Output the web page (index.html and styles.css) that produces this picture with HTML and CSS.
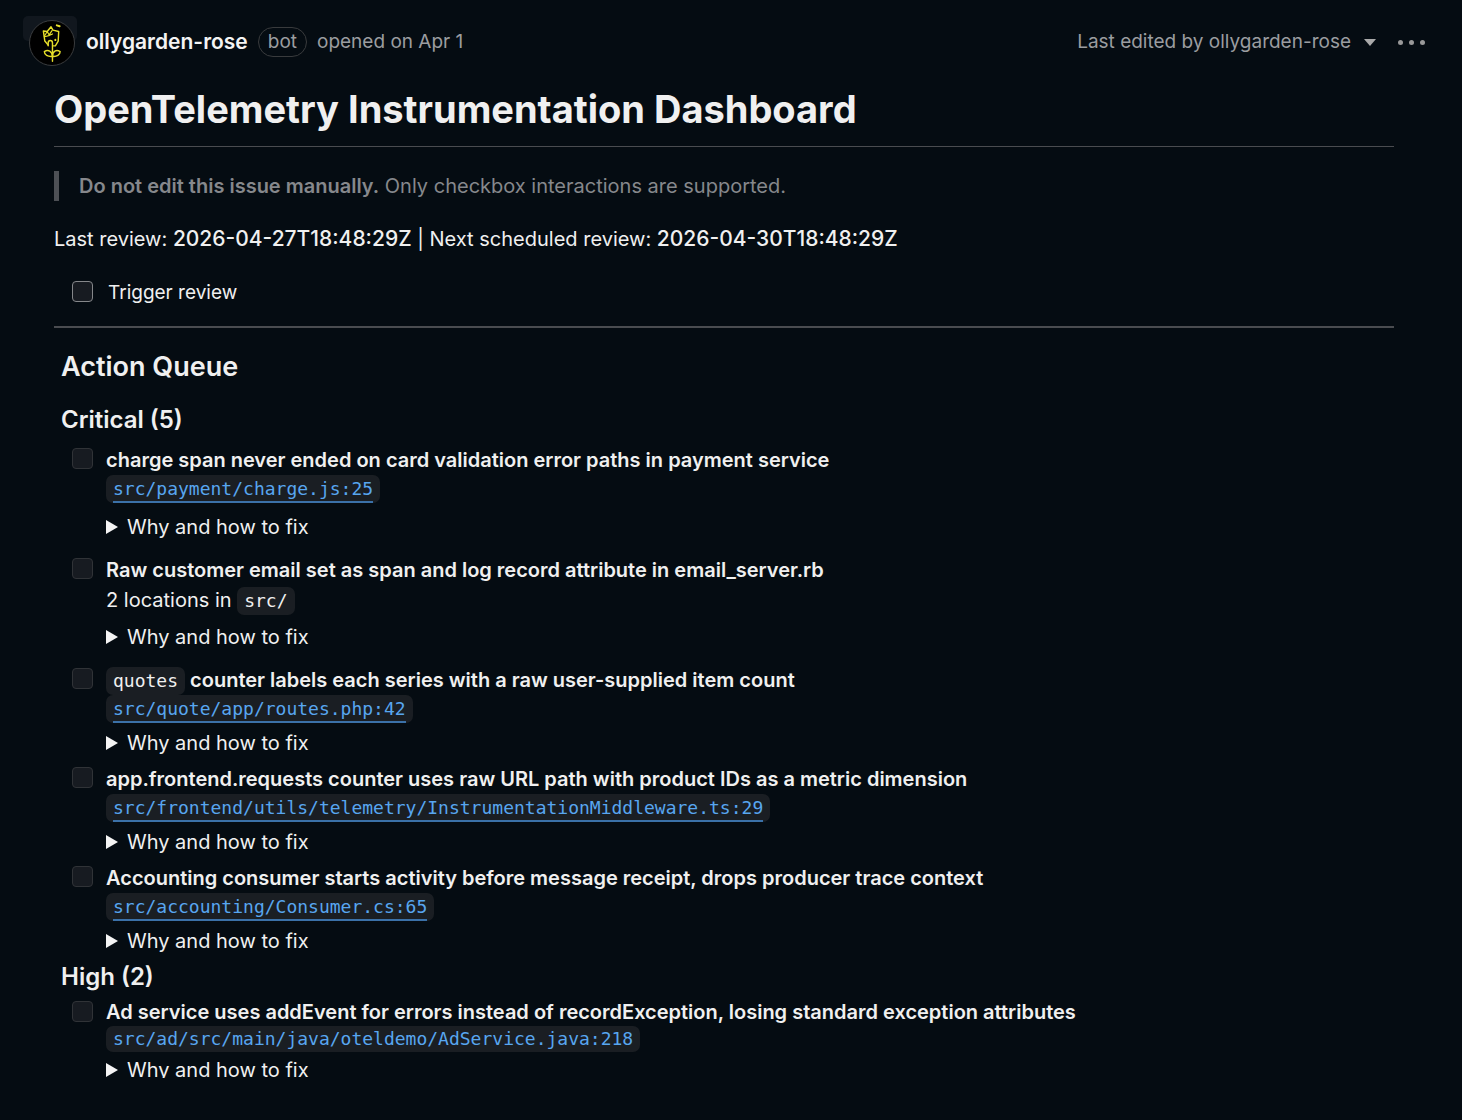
FILE: index.html
```
<!DOCTYPE html>
<html lang="en">

<head>
  <meta charset="UTF-8" />
  <meta name="viewport" content="width=device-width, initial-scale=1.0">
  <title>OpenTelemetry Instrumentation Dashboard</title>
  <link rel="stylesheet" href="styles.css">
</head>

<body>
  <header class="issue-header">
    <div class="avatar">
      <svg viewBox="0 0 46 46" width="46" height="46" fill="none" stroke="#e6df2a" stroke-width="1.5" stroke-linecap="round" stroke-linejoin="round" aria-hidden="true">
        <path d="M19 25l-3.500-4L14 10.500l4 .5 4-5 2 3.500 6 1.500-.5 10-3 5h-2" />
        <path d="M15 16l3-5 2 3.500 3-4.500M15.500 16.500l5-1.500 3-1.500" stroke-width="1.200" />
        <path d="M19 26v-3c0-3.500 4.500-3.500 4.500 0v19" />
        <path d="M28 4.500l3 1" stroke-width="2" />
        <path d="M26.500 19.500v.5" stroke-width="2" />
        <path d="M23.500 37c-5 .5-8.500-1.500-8.500-5 4-2.500 8-.5 8.500 5zM23.500 37c4.500.5 8-1.500 8-5-4-2.500-8-.5-8 5z" />
      </svg>
    </div>
    <a class="author" href="#">ollygarden-rose</a>
    <span class="badge">bot</span>
    <span class="opened">opened on Apr 1</span>
    <div class="header-right">
      <button class="edited" type="button">Last edited by ollygarden-rose <span class="caret"></span></button>
      <button class="kebab" type="button" aria-label="Show options"><i></i><i></i><i></i></button>
    </div>
  </header>

  <main class="issue-body">
    <h1>OpenTelemetry Instrumentation Dashboard</h1>
    <blockquote><strong>Do not edit this issue manually.</strong> Only checkbox interactions are supported.</blockquote>
    <p class="review">Last review: <strong>2026-04-27T18:48:29Z</strong> | Next scheduled review: <strong>2026-04-30T18:48:29Z</strong></p>
    <div class="trigger">
      <input type="checkbox" id="trigger">
      <label for="trigger">Trigger review</label>
    </div>
    <hr>

    <section class="queue">
      <h2>Action Queue</h2>
      <h3>Critical (5)</h3>
      <ul class="tasks">
        <li class="loose">
          <input type="checkbox" id="task1">
          <div class="task">
            <label for="task1">charge span never ended on card validation error paths in payment service</label>
            <p><a href="#"><code><span>src/payment/charge.js:25</span></code></a></p>
            <details><summary>Why and how to fix</summary></details>
          </div>
        </li>
        <li class="loose">
          <input type="checkbox" id="task2">
          <div class="task">
            <label for="task2">Raw customer email set as span and log record attribute in email_server.rb</label>
            <p>2 locations in <code>src/</code></p>
            <details><summary>Why and how to fix</summary></details>
          </div>
        </li>
        <li>
          <input type="checkbox" id="task3">
          <div class="task">
            <label for="task3"><code>quotes</code> counter labels each series with a raw user-supplied item count</label>
            <p><a href="#"><code><span>src/quote/app/routes.php:42</span></code></a></p>
            <details><summary>Why and how to fix</summary></details>
          </div>
        </li>
        <li>
          <input type="checkbox" id="task4">
          <div class="task">
            <label for="task4">app.frontend.requests counter uses raw URL path with product IDs as a metric dimension</label>
            <p><a href="#"><code><span>src/frontend/utils/telemetry/InstrumentationMiddleware.ts:29</span></code></a></p>
            <details><summary>Why and how to fix</summary></details>
          </div>
        </li>
        <li>
          <input type="checkbox" id="task5">
          <div class="task">
            <label for="task5">Accounting consumer starts activity before message receipt, drops producer trace context</label>
            <p><a href="#"><code><span>src/accounting/Consumer.cs:65</span></code></a></p>
            <details><summary>Why and how to fix</summary></details>
          </div>
        </li>
      </ul>

      <h3>High (2)</h3>
      <ul class="tasks tight">
        <li>
          <input type="checkbox" id="task6">
          <div class="task">
            <label for="task6">Ad service uses addEvent for errors instead of recordException, losing standard exception attributes</label>
            <p><a href="#"><code><span>src/ad/src/main/java/oteldemo/AdService.java:218</span></code></a></p>
            <details><summary>Why and how to fix</summary></details>
          </div>
        </li>
      </ul>
    </section>
  </main>
</body>

</html>
```
FILE: styles.css
```
* {
  box-sizing: border-box;
  margin: 0;
  padding: 0;
}

body {
  min-height: 100vh;
  background-color: #050c12;
  color: #f0f0f0;
  font-family: Inter, "Liberation Sans", sans-serif;
  font-size: 20px;
  line-height: 30px;
}

/* Header */
.issue-header {
  display: flex;
  align-items: center;
  padding: 16px 37px 0 23px;
  height: 68px;
  color: #9b9da0;
  font-size: 19px;
}

.avatar {
  position: relative;
  width: 54px;
  height: 52px;
  padding: 4px 0 0 6px;
  margin-right: 9px;
}

/* faint plate behind the round picture */
.avatar::before {
  content: "";
  position: absolute;
  left: 0;
  top: 0;
  width: 54px;
  height: 25px;
  border-radius: 5px;
  background: #11171e;
}

.avatar svg {
  position: relative;
  display: block;
  border: 1px solid #3a3c3e;
  border-radius: 50%;
  background: #000;
}

.author {
  color: #f4f4f4;
  font-size: 21px;
  font-weight: 600;
  text-decoration: none;
}

.badge {
  margin: 0 10px;
  padding: 0 9px;
  border: 1px solid #393b3d;
  border-radius: 15px;
  line-height: 28px;
}

.header-right {
  display: flex;
  align-items: center;
  margin-left: auto;
  gap: 22px;
}

button {
  border: none;
  background: none;
  color: inherit;
  font: inherit;
  cursor: pointer;
}

.edited {
  display: flex;
  align-items: center;
  gap: 13px;
}

.caret {
  border: 6px solid transparent;
  border-top: 7px solid #aaa;
  border-bottom: none;
}

.kebab {
  display: flex;
  gap: 6px;
}

.kebab i {
  width: 5px;
  height: 5px;
  border-radius: 50%;
  background: #999;
}

/* Issue body */
.issue-body {
  padding: 16px 68px 40px 54px;
}

h1 {
  padding-bottom: 12px;
  border-bottom: 1px solid #4a4c50;
  font-size: 38px;
  line-height: 50px;
  font-weight: 700;
}

blockquote {
  margin-top: 24px;
  padding-left: 20px;
  border-left: 5px solid #4d5055;
  color: #86888c;
}

strong {
  font-weight: 600;
}

.review {
  margin-top: 23px;
}

.review strong {
  font-size: 21px;
  font-weight: 500;
}

.trigger {
  display: flex;
  gap: 15px;
  margin: 24px 0 18px;
  padding-left: 18px;
  font-size: 19px;
}

input[type="checkbox"] {
  flex: none;
  appearance: none;
  width: 21px;
  height: 21px;
  margin-top: 3px;
  border: 1px solid #303337;
  border-radius: 4px;
  background: #171b21;
}

.trigger input[type="checkbox"] {
  border-color: #85878a;
}

hr {
  height: 2px;
  border: none;
  background: #4a4c50;
}

h2 {
  font-size: 27px;
  line-height: 40px;
  font-weight: 600;
}

h3 {
  font-size: 24px;
  line-height: 30px;
  font-weight: 600;
}

/* Task lists */
.queue {
  padding: 19px 0 0 7px;
}

.queue h2 {
  margin-bottom: 18px;
}

.tasks {
  padding: 10px 0 6px 11px;
  list-style: none;
}

.tasks li {
  display: flex;
  gap: 13px;
  margin-bottom: 6px;
}

.tasks li:last-child {
  margin-bottom: 0;
}

.tasks li.loose {
  margin-bottom: 13px;
}

.task label {
  display: block;
  font-weight: 600;
}

.task p {
  height: 30px;
}

.tasks a {
  color: #58a6f0;
  text-decoration: none;
}

code {
  display: inline-block;
  padding: 0 7px;
  border-radius: 7px;
  background: #1a1e23;
  font-family: "DejaVu Sans Mono", monospace;
  font-size: 18px;
  font-weight: 400;
  line-height: 28px;
}

a code {
  vertical-align: top;
}

a code span {
  display: block;
  height: 28px;
  border-bottom: 2px solid #3b71a8;
}

details {
  margin-top: 3px;
}

.loose details {
  margin-top: 7px;
}

summary {
  display: flex;
  align-items: flex-start;
  gap: 9px;
  cursor: pointer;
}

summary::before {
  content: "";
  margin-top: 8px;
  border: 7px solid transparent;
  border-left: 12px solid #f4f4f4;
  border-right: none;
}

/* Tight list, its last row is cut off at the bottom */
.tight {
  padding-top: 6px;
}

.tight label {
  line-height: 28px;
}

.tight p {
  height: 26px;
}

.tight code,
.tight code span {
  height: 26px;
  line-height: 26px;
  border-bottom: none;
}

.tight summary {
  height: 23px;
  overflow: hidden;
}
```
